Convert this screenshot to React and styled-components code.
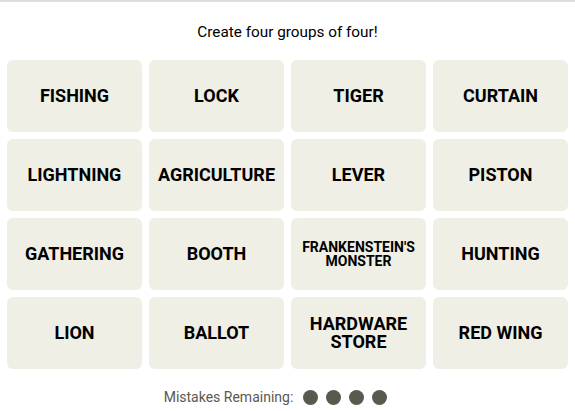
import React from "react";
import styled, { createGlobalStyle } from "styled-components";

const Global = createGlobalStyle`
  html, body { margin: 0; padding: 0; background: #fff; }
  body { font-family: Roboto, "Liberation Sans", sans-serif; color: #000; }
`;

const Page = styled.div`
  width: 575px;
  border-top: 2px solid #dedede;
  box-sizing: border-box;
  display: flex;
  flex-direction: column;
  align-items: center;
`;

const Title = styled.h1`
  margin: 20px 0 0;
  height: 20px;
  line-height: 20px;
  font-size: 15.3px;
  font-weight: 400;
`;

const Grid = styled.div`
  margin-top: 18px;
  display: grid;
  grid-template-columns: repeat(4, 135px);
  grid-auto-rows: 72px;
  gap: 7px;
`;

const Tile = styled.button`
  all: unset;
  background: #efefe6;
  border-radius: 6px;
  display: flex;
  align-items: center;
  justify-content: center;
  text-align: center;
  font-family: Roboto, "Liberation Sans", sans-serif;
  font-weight: 700;
  text-transform: uppercase;
  color: #000;
  font-size: ${(p) => (p.$small ? "14px" : "18px")};
  line-height: ${(p) => (p.$small ? "14px" : "18px")};
  padding: 0 4px;
`;

const Footer = styled.div`
  margin-top: 20px;
  margin-right: 24px;
  display: flex;
  align-items: center;
  gap: 10px;
  font-size: 14px;
  color: #5a594e;
`;

const Dots = styled.div`
  display: flex;
  gap: 8px;
`;

const Dot = styled.span`
  width: 15px;
  height: 15px;
  border-radius: 50%;
  background: #5a594e;
`;

const words = [
  "Fishing", "Lock", "Tiger", "Curtain",
  "Lightning", "Agriculture", "Lever", "Piston",
  "Gathering", "Booth", "Frankenstein's Monster", "Hunting",
  "Lion", "Ballot", "Hardware Store", "Red Wing",
];

export default function App() {
  return (
    <Page>
      <Global />
      <Title>Create four groups of four!</Title>
      <Grid>
        {words.map((w) => (
          <Tile key={w} $small={w.length > 16}>
            {w === "Hardware Store" ? (
              <span>Hardware<br />Store</span>
            ) : w.length > 16 ? (
              <span>Frankenstein's<br />Monster</span>
            ) : (
              w
            )}
          </Tile>
        ))}
      </Grid>
      <Footer>
        <span>Mistakes Remaining:</span>
        <Dots>
          <Dot />
          <Dot />
          <Dot />
          <Dot />
        </Dots>
      </Footer>
    </Page>
  );
}
